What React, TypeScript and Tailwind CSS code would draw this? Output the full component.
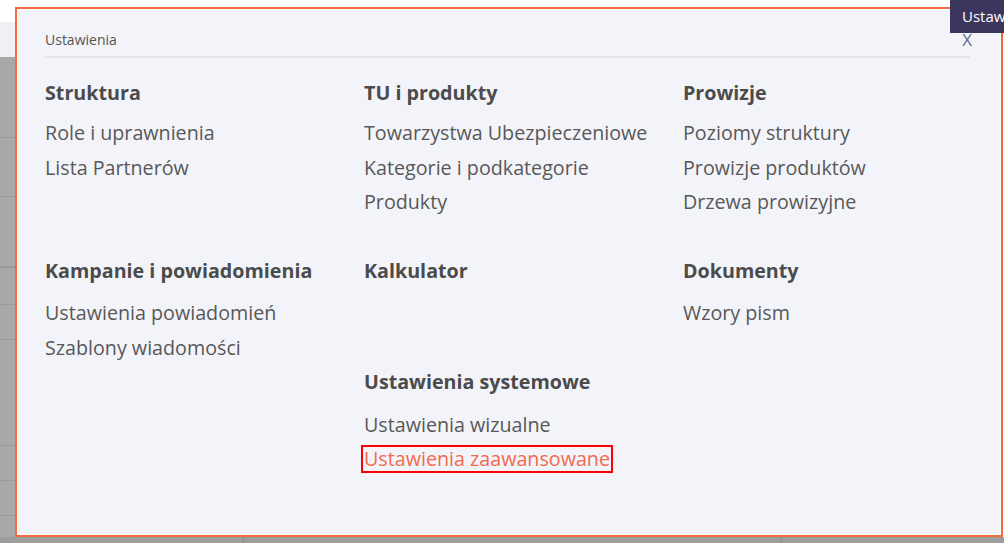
import React from 'react';

interface Section {
  title: string;
  items: string[];
  active?: string;
}

const ROWS: (Section | null)[][] = [
  [
    { title: 'Struktura', items: ['Role i uprawnienia', 'Lista Partnerów'] },
    { title: 'TU i produkty', items: ['Towarzystwa Ubezpieczeniowe', 'Kategorie i podkategorie', 'Produkty'] },
    { title: 'Prowizje', items: ['Poziomy struktury', 'Prowizje produktów', 'Drzewa prowizyjne'] },
  ],
  [
    { title: 'Kampanie i powiadomienia', items: ['Ustawienia powiadomień', 'Szablony wiadomości'] },
    { title: 'Kalkulator', items: [] },
    { title: 'Dokumenty', items: ['Wzory pism'] },
  ],
  [
    null,
    { title: 'Ustawienia systemowe', items: ['Ustawienia wizualne', 'Ustawienia zaawansowane'], active: 'Ustawienia zaawansowane' },
    null,
  ],
];

const MenuSection: React.FC<{ section: Section | null; gap: string }> = ({ section, gap }) => {
  if (!section) return <div />;
  return (
    <div className="flex flex-col">
      <h3 className={`text-[19.7px] font-bold leading-[26px] text-[#4b4b4b] ${gap}`}>{section.title}</h3>
      {section.items.map(item =>
        item === section.active ? (
          <div key={item} className="leading-[34.5px]">
            <span className="text-[19.7px] text-[#f2694e] border-2 border-[#ff0000] px-[1px] -ml-[3px] leading-[24px] inline-block">
              {item}
            </span>
          </div>
        ) : (
          <a key={item} className="text-[19.7px] leading-[34.5px] text-[#585858] cursor-pointer hover:text-[#f2694e]">
            {item}
          </a>
        )
      )}
    </div>
  );
};

export default function App() {
  const rowHeights = ['h-[178px]', 'h-[111px]', 'h-auto'];
  const gaps = ['mb-[10px]', 'mb-[12px]', 'mb-[13px]'];

  return (
    <div
      className="relative w-[1004px] h-[543px] overflow-hidden bg-white"
      style={{ fontFamily: '"Open Sans", "Liberation Sans", sans-serif' }}
    >
      {/* Dimmed page behind the modal */}
      <div className="absolute left-0 top-[22px] w-[20px] h-[35px] bg-[#eef0f4]" />
      <div className="absolute left-0 top-[57px] w-[20px] h-[486px] bg-[#a9a9a9] flex flex-col">
        <div className="h-[81px] border-b border-[#999]" />
        <div className="h-[59px] border-b border-[#999]" />
        <div className="h-[71px] border-b-2 border-[#999]" />
        <div className="h-[37px] border-b border-[#999]" />
        <div className="h-[35px] border-b border-[#999]" />
        <div className="h-[106px] border-b border-[#999]" />
        <div className="h-[35px] border-b border-[#999]" />
        <div className="h-[35px] border-b border-[#999]" />
      </div>
      <div className="absolute left-0 top-[537px] w-[1004px] h-[6px] bg-[#9d9d9d] flex">
        <div className="w-[244px] border-r border-[#8c8c8c]" />
        <div className="w-[538px] border-r border-[#8c8c8c]" />
      </div>

      {/* Modal */}
      <div className="absolute left-[15px] top-[7px] w-[988px] h-[530px] border-2 border-[#f26b3a] bg-white">
        <div className="w-full h-full border border-white bg-[#f3f4f9] px-[27px]">
          <div className="flex items-start justify-between h-[48px] pt-[20px] border-b-2 border-[#e4e5eb] mr-[3px]">
            <span className="text-[14px] leading-[20px] text-[#555]">Ustawienia</span>
            <span className="text-[17px] leading-[20px] text-[#5d6b86] -mr-[2px]">X</span>
          </div>

          <div className="pt-[22px] flex flex-col">
            {ROWS.map((row, i) => (
              <div key={i} className={`grid grid-cols-[319px_319px_319px] ${rowHeights[i]}`}>
                {row.map((section, j) => (
                  <MenuSection key={j} section={section} gap={gaps[i]} />
                ))}
              </div>
            ))}
          </div>
        </div>
      </div>

      {/* Tooltip */}
      <div className="absolute left-[950px] top-0 h-[33px] w-[120px] bg-[#3c365f] text-white text-[15px] flex items-center pl-[12px] whitespace-nowrap">
        Ustawienia
      </div>
    </div>
  );
}
